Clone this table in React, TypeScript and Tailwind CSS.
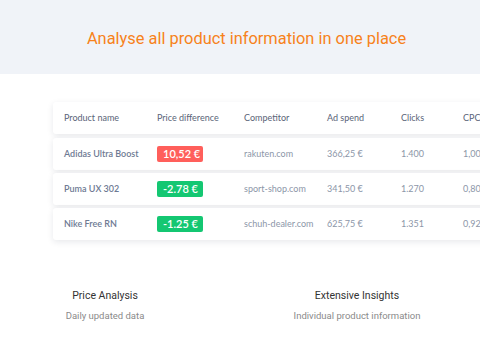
import React from "react";

const rows = [
  { name: "Adidas Ultra Boost", diff: "10,52 €", up: true, site: "rakuten.com", spend: "366,25 €", clicks: "1.400", cpc: "1,00 €" },
  { name: "Puma UX 302", diff: "-2.78 €", up: false, site: "sport-shop.com", spend: "341,50 €", clicks: "1.270", cpc: "0,80 €" },
  { name: "Nike Free RN", diff: "-1.25 €", up: false, site: "schuh-dealer.com", spend: "625,75 €", clicks: "1.351", cpc: "0,92 €" },
];

const font = { fontFamily: "Lato, 'Open Sans', sans-serif" };

export default function App() {
  return (
    <div className="w-[480px] h-[360px] overflow-hidden bg-white" style={font}>
      {/* Header */}
      <div className="h-[74px] bg-[#f0f3f8] flex items-center justify-center pl-[13px]">
        <h1
          className="text-[16.4px] text-[#f7821b] pt-[4px]"
          style={{ fontFamily: "Roboto, sans-serif" }}
        >
          Analyse all product information in one place
        </h1>
      </div>

      {/* Table */}
      <div className="pt-[28px] pl-[53px] flex flex-col gap-[3px] w-[600px]">
        <div className="h-[32px] mb-[1px] bg-white rounded-[3px] shadow-[0_2px_6px_rgba(30,40,70,0.1)] flex items-center pl-[11px] text-[9px] text-[#5a6478]">
          <div className="w-[93px]">Product name</div>
          <div className="w-[87px]">Price difference</div>
          <div className="w-[83px]">Competitor</div>
          <div className="w-[74px]">Ad spend</div>
          <div className="w-[62px]">Clicks</div>
          <div>CPC</div>
        </div>
        {rows.map((r) => (
          <div
            key={r.name}
            className="h-[32px] bg-white rounded-[3px] shadow-[0_2px_6px_rgba(30,40,70,0.1)] flex items-center pl-[11px] text-[9px] text-[#8c96a8]"
          >
            <div className="w-[93px] font-semibold text-[#6e7a93]">{r.name}</div>
            <div className="w-[87px]">
              <span
                className={
                  "inline-flex items-center w-[46px] h-[16px] pl-[6px] rounded-[2px] text-white text-[11px] font-semibold " +
                  (r.up ? "bg-[#ff5f5b]" : "bg-[#14c772]")
                }
              >
                {r.diff}
              </span>
            </div>
            <div className="w-[83px]">{r.site}</div>
            <div className="w-[74px]">{r.spend}</div>
            <div className="w-[62px]">{r.clicks}</div>
            <div className="whitespace-nowrap">{r.cpc}</div>
          </div>
        ))}
      </div>

      {/* Features */}
      <div className="flex pt-[48px]" style={{ fontFamily: "Roboto, sans-serif" }}>
        <div className="w-[170px] ml-[20px] flex flex-col items-center">
          <div className="text-[10.5px] text-[#333]">Price Analysis</div>
          <div className="text-[9.5px] text-[#8a8a8a] mt-[5px]">Daily updated data</div>
        </div>
        <div className="w-[170px] ml-[82px] flex flex-col items-center">
          <div className="text-[10.5px] text-[#333]">Extensive Insights</div>
          <div className="text-[9.5px] text-[#8a8a8a] mt-[5px]">Individual product information</div>
        </div>
      </div>
    </div>
  );
}
